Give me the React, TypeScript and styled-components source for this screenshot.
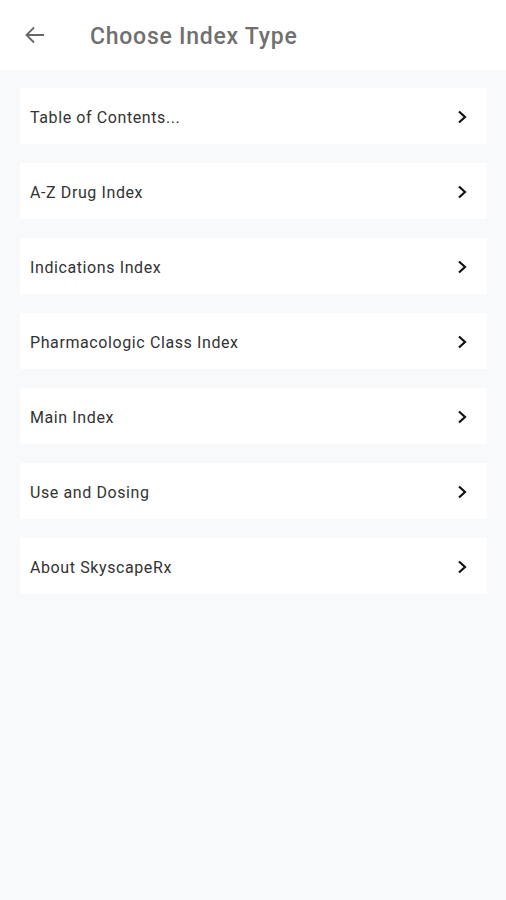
import React from 'react';
import styled, { createGlobalStyle } from 'styled-components';

const GlobalStyle = createGlobalStyle`
  html, body {
    margin: 0;
    padding: 0;
    background: #f8f9fa;
    font-family: Roboto, "Noto Sans", sans-serif;
  }
`;

const Page = styled.div`
  width: 506px;
  min-height: 900px;
  background: #f8f9fa;
`;

const Header = styled.div`
  height: 70px;
  background: #ffffff;
  display: flex;
  align-items: center;
  padding-left: 24px;
  padding-top: 2px;
  box-sizing: border-box;
`;

const BackButton = styled.div`
  width: 22px;
  height: 22px;
  display: flex;
  align-items: center;
  justify-content: center;
  margin-right: 44px;
  margin-top: -2px;
`;

const Title = styled.h1`
  margin: 0;
  font-size: 23px;
  font-weight: 500;
  color: #707070;
  letter-spacing: 0.75px;
`;

const List = styled.div`
  display: flex;
  flex-direction: column;
  gap: 19px;
  padding: 18px 19px 0 20px;
`;

const Item = styled.div`
  height: 56px;
  background: #ffffff;
  display: flex;
  align-items: center;
  justify-content: space-between;
  padding: 2px 18px 0 10px;
  box-sizing: border-box;
`;

const Label = styled.span`
  font-size: 16px;
  color: #333333;
  letter-spacing: 0.6px;
`;

const Chevron = () => (
  <svg width="14" height="16" viewBox="0 0 14 16">
    <path d="M4 2.5 L10 8 L4 13.5" fill="none" stroke="#111" strokeWidth="2.2" />
  </svg>
);

const items = [
  'Table of Contents...',
  'A-Z Drug Index',
  'Indications Index',
  'Pharmacologic Class Index',
  'Main Index',
  'Use and Dosing',
  'About SkyscapeRx',
];

const App: React.FC = () => (
  <Page>
    <GlobalStyle />
    <Header>
      <BackButton>
        <svg width="22" height="22" viewBox="0 0 22 22">
          <path d="M20 11 H3 M10 3.5 L2.5 11 L10 18.5" fill="none" stroke="#666" strokeWidth="1.8" />
        </svg>
      </BackButton>
      <Title>Choose Index Type</Title>
    </Header>
    <List>
      {items.map((label) => (
        <Item key={label}>
          <Label>{label}</Label>
          <Chevron />
        </Item>
      ))}
    </List>
  </Page>
);

export default App;
